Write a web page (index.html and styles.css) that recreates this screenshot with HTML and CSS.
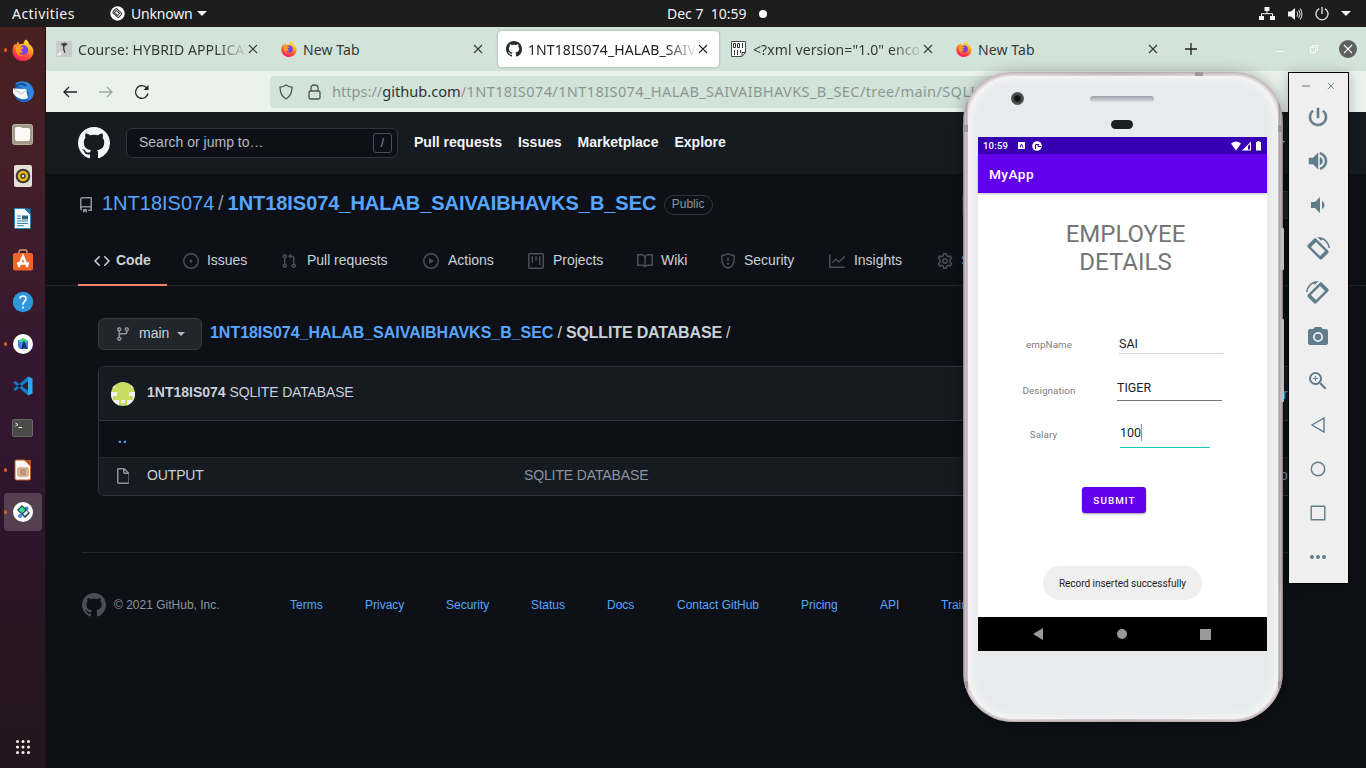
FILE: index.html
```html
<!DOCTYPE html>
<html lang="en">
<head>
<meta charset="utf-8">
<title>1NT18IS074_HALAB_SAIVAIBHAVKS_B_SEC</title>
<link rel="stylesheet" href="styles.css">
</head>
<body>
<svg class="defs" width="0" height="0">
  <defs>
    <linearGradient id="fx" x1="0.8" y1="0" x2="0.3" y2="1"><stop offset="0" stop-color="#fff03a"/><stop offset=".35" stop-color="#ffae24"/><stop offset=".65" stop-color="#ff5630"/><stop offset="1" stop-color="#f5156c"/></linearGradient>
    <symbol id="firefox" viewBox="0 0 22 22"><path fill="url(#fx)" d="M14 .5c2 1.400 2.700 3 3 4.400 2.600 1.600 4.500 4.700 4.500 7.300C21.500 17.800 17 22 11.200 22 5.200 22 .5 17.600.5 11.900c0-3 .9-5.500 2.700-7.400l.8 2 1.800-4 1.700 3c1.400-.8 2.700-.9 4-.5C11.500 3.500 12.200 1.700 14 .5z"/><circle cx="11.500" cy="11" r="4.700" fill="#7543e5"/><path fill="#ff9a22" d="M3.500 7.500c2.500-1.500 4.500-.8 5.500.4 1.400.1 2.400.3 2.700.8-.5 1.200-2.500 1.100-2.700 2.200-.1 1 1.300 1.600 2.500 1.100-.9 2-3.500 2.400-5 .9.200 2.500 3 4 5.500 3.500-4 2-9-.8-8.500-8.900z"/></symbol>
    <symbol id="mark" viewBox="0 0 16 16"><path d="M8 0C3.580 0 0 3.580 0 8c0 3.540 2.290 6.530 5.470 7.590.4.070.55-.17.55-.38 0-.19-.01-.82-.01-1.490-2.010.37-2.530-.49-2.690-.94-.09-.23-.48-.94-.82-1.130-.28-.15-.68-.52-.01-.53.63-.01 1.080.58 1.230.82.720 1.210 1.870.87 2.330.66.070-.52.280-.87.510-1.070-1.780-.2-3.640-.89-3.640-3.950 0-.87.310-1.590.820-2.150-.08-.2-.36-1.020.08-2.120 0 0 .67-.21 2.200.82.640-.18 1.320-.27 2-.27.680 0 1.360.09 2 .27 1.530-1.040 2.200-.82 2.200-.82.440 1.100.160 1.920.080 2.120.510.560.820 1.270.820 2.150 0 3.070-1.870 3.750-3.650 3.950.290.250.540.730.540 1.480 0 1.070-.01 1.930-.01 2.200 0 .210.150.460.550.380A8.013 8.013 0 0016 8c0-4.420-3.580-8-8-8z"/></symbol>
    <symbol id="x" viewBox="0 0 10 10"><path d="M1 1l8 8M9 1l-8 8" fill="none" stroke="currentColor" stroke-width="1.100"/></symbol>
    <symbol id="rotate" viewBox="0 0 24 24"><path d="M16.480 2.520c3.270 1.550 5.610 4.720 5.970 8.480h1.500C23.440 4.840 18.290 0 12 0l-.66.03 3.810 3.810 1.330-1.320zm-6.250-.77c-.59-.59-1.540-.59-2.120 0L1.750 8.110c-.59.59-.59 1.540 0 2.120l12.020 12.020c.59.59 1.540.59 2.120 0l6.360-6.360c.59-.59.59-1.540 0-2.120L10.230 1.750zm4.600 18.100L4.150 9.170l5.020-5.020 10.680 10.680-5.020 5.020z"/><path d="M8.500 2.500l-6.500 6.500 2 2 6.500-6.500zM13.500 19.500l6.500-6.500 2 2-6.500 6.500z"/></symbol>
  </defs>
</svg>

<div class="desktop">
  <header class="topbar">
    <span class="activities">Activities</span>
    <span class="appmenu">
      <svg width="15" height="15" viewBox="0 0 15 15"><circle cx="7.500" cy="7.500" r="7.200" fill="#fff"/><g transform="rotate(42 7.500 7.500)" fill="none" stroke="#333" stroke-width="1"><rect x="3" y="4.500" width="8" height="5.500" rx="1"/><path d="M4.500 6h4.500v3H4.500z" fill="#eee"/></g></svg>
      <span class="appname">Unknown</span><i class="caret"></i>
    </span>
    <span class="clock">Dec 7&nbsp; 10:59</span><i class="dot"></i>
    <span class="tray">
      <svg width="16" height="14" viewBox="0 0 16 14" fill="#f4f4f4"><path d="M5.500 0h5v4h-5zM0 9h5v4H0zM11 9h5v4h-5z"/><path d="M8 4v3M2.500 9V6.700h11V9" fill="none" stroke="#f4f4f4"/></svg>
      <svg width="16" height="14" viewBox="0 0 16 14"><path d="M1 4.500h3L8 1v12L4 9.500H1z" fill="#f4f4f4"/><path d="M9.800 4.500q1.800 2.500 0 5M11.500 3q3 4 0 8M13.200 1.500q3.500 5.500 0 11" fill="none" stroke="#ccc" stroke-width="1.100"/></svg>
      <svg width="14" height="14" viewBox="0 0 14 14" fill="none" stroke="#e8e8e8" stroke-width="1.300"><path d="M7 0v7M4.200 1.600a6 6 0 105.600 0"/></svg>
      <i class="caret"></i>
    </span>
  </header>

  <aside class="dock">
    <div class="app run"><svg width="22" height="22"><use href="#firefox"/></svg></div>
    <div class="app"><svg width="22" height="22" viewBox="0 0 22 22"><circle cx="12" cy="11.500" r="9.800" fill="#1d64bd"/><path d="M3 3C7-1 14-.5 18 3c4 4 5 9 2 14l-4 3 1-9z" fill="#2f8ade"/><path d="M1 7.500l13 .5 2 9c-5 3-12 0-15-5z" fill="#f7f8fa"/><path d="M2 8l7 5 6-4" fill="none" stroke="#a9c4df"/><path d="M3 6C6 2 11 2 14 5" fill="none" stroke="#1750a0" stroke-width="2"/></svg></div>
    <div class="app"><svg width="21" height="21" viewBox="0 0 21 21"><rect x=".5" y=".5" width="20" height="20" rx="2" fill="#a29a88" stroke="#b8b09d"/><path d="M3 5q0-2 2-2h4l1 1h6q2 0 2 2v9q0 2-2 2H5q-2 0-2-2z" fill="#faf9f6"/></svg></div>
    <div class="app"><svg width="18" height="22" viewBox="0 0 18 22"><rect width="18" height="22" rx="2" fill="#e4e0d6"/><circle cx="9" cy="11" r="7.300" fill="#3b3a38"/><circle cx="9" cy="11" r="4" fill="none" stroke="#f0b90f" stroke-width="2.600"/><circle cx="9" cy="11" r="1.300" fill="#ddd"/></svg></div>
    <div class="app"><svg width="17" height="21" viewBox="0 0 17 21"><path d="M1.500.5H11L16.500 6v13.500q0 1-1 1h-14q-1 0-1-1v-18q0-1 1-1z" fill="#fafdff" stroke="#2784b5"/><path d="M10 .5h6.500V7z" fill="#1a78ad"/><path d="M3 8h4M3 10.500h4M3 13h11M3 15.500h11M3 17.700h7" stroke="#2e86ba" stroke-width="1.100"/><path d="M8 7.500h6v4H8z" fill="#26668b"/></svg></div>
    <div class="app"><svg width="22" height="22" viewBox="0 0 22 22"><path d="M7 5V3q0-2 2-2h4q2 0 2 2v2" fill="none" stroke="#dc9c76" stroke-width="1.400"/><rect x="1" y="4" width="20" height="17.500" rx="2" fill="#f0642b"/><path d="M6.500 18L11 7l4.500 11M5 14.500h12" fill="none" stroke="#fff" stroke-width="2.300"/></svg></div>
    <div class="app"><svg width="22" height="22" viewBox="0 0 22 22"><circle cx="11" cy="11" r="10.200" fill="#2e96dd"/><path d="M8 7.500Q8 5 11 5t3 2.700c0 2.300-3 2.600-3 6" fill="none" stroke="#fff" stroke-width="1.700"/><circle cx="11" cy="16.500" r="1.100" fill="#fff"/></svg></div>
    <div class="app run"><svg width="20" height="20" viewBox="0 0 20 20"><circle cx="10" cy="10" r="10" fill="#fff"/><path d="M5 6h9v1h1v8H7l-2-2z" fill="#3f80f0"/><path d="M6 6.500q4-5 8 0v1.500H6z" fill="#3ddc84"/><path d="M9 15l2-6.500L13.500 15M9.500 13h3.500" fill="none" stroke="#0c2846" stroke-width="1.400"/></svg></div>
    <div class="app"><svg width="20" height="20" viewBox="0 0 20 20"><path d="M15 .5l4.500 2v15l-4.500 2z" fill="#2ba9f2"/><path d="M15 .5v4.800L2.200 15 .3 13.300zM15 19.500v-4.800L2.200 5 .3 6.700z" fill="#0f7dc8"/></svg></div>
    <div class="app"><svg width="21" height="18" viewBox="0 0 21 18"><rect x=".5" y=".5" width="20" height="17" rx="1.500" fill="#4a4a48" stroke="#686866"/><path d="M3.500 4l2.500 1.500L3.500 7M6.500 8.500H10" fill="none" stroke="#eee"/></svg></div>
    <div class="app run"><svg width="18" height="22" viewBox="0 0 18 22"><path d="M2 1h9l5.500 5.500v13q0 1.500-1.500 1.500H2.500Q1 21 1 19.500V2q0-1 1-1z" fill="#fdf8f4" stroke="#c6591c"/><path d="M10 1h7v7z" fill="#b44d12"/><rect x="4" y="9" width="10" height="8" rx="1" fill="#f7dfd0" stroke="#c6753c"/><path d="M5.500 11h7M5.500 13h7M5.500 15h7" stroke="#8d4c24"/></svg></div>
    <div class="app run active"><svg width="20" height="20" viewBox="0 0 20 20"><circle cx="10" cy="10" r="10" fill="#fff"/><circle cx="7" cy="14" r="2" fill="#4285f4"/><circle cx="13.500" cy="6.500" r="2" fill="#4285f4"/><path d="M4 8l5-5 8 8-5 5z" fill="#123a50"/><path d="M5.500 8L9 4.500l3.500 3.500L9 11.500z" fill="#3ddc84"/><path d="M10 12l3.500-3.500 2 2L12 14z" fill="#d8e8f2"/></svg></div>
    <svg class="grid" width="14" height="14" viewBox="0 0 14 14" fill="#f2f2f2"><circle cx="1.500" cy="1.500" r="1.500"/><circle cx="7" cy="1.500" r="1.500"/><circle cx="12.500" cy="1.500" r="1.500"/><circle cx="1.500" cy="7" r="1.500"/><circle cx="7" cy="7" r="1.500"/><circle cx="12.500" cy="7" r="1.500"/><circle cx="1.500" cy="12.500" r="1.500"/><circle cx="7" cy="12.500" r="1.500"/><circle cx="12.500" cy="12.500" r="1.500"/></svg>
  </aside>

  <main class="browser">
    <div class="tabs">
      <div class="tab"><svg width="16" height="16" viewBox="0 0 16 16"><rect width="16" height="16" fill="#c9caca"/><path d="M4.500 3l4-1.500L12 3 8.500 5.500V8l1 4H8.500L7 8.500V5z" fill="#444"/><path d="M1 13l5-3-1 4.500H1z" fill="#eee"/></svg><span class="label fade">Course: HYBRID APPLICAT</span><svg class="close"><use href="#x"/></svg></div>
      <div class="tab"><svg width="16" height="16"><use href="#firefox"/></svg><span class="label">New Tab</span><svg class="close"><use href="#x"/></svg></div>
      <div class="tab current"><svg width="16" height="16" fill="#24292e"><use href="#mark"/></svg><span class="label fade">1NT18IS074_HALAB_SAIV</span><svg class="close"><use href="#x"/></svg></div>
      <div class="tab"><svg width="16" height="16" viewBox="0 0 16 16"><path d="M.5.500h14v11l-3.500 4H.5z" fill="#fff" stroke="#444a48"/><path d="M2.500 2.500h2v4h-2zM6.500 2.500h2v4h-2zM11.500 2v5M3.500 9v5M6.500 9v5M9.500 9v3M11 15v-3.500h3.500" fill="none" stroke="#333"/></svg><span class="label fade">&lt;?xml version="1.0" encod</span><svg class="close"><use href="#x"/></svg></div>
      <div class="tab"><svg width="16" height="16"><use href="#firefox"/></svg><span class="label">New Tab</span><svg class="close"><use href="#x"/></svg></div>
      <svg class="plus" width="12" height="12" viewBox="0 0 12 12"><path d="M6 0v12M0 6h12" stroke="#222" stroke-width="1.300"/></svg>
      <div class="winctl">
        <i class="min"></i>
        <svg width="8" height="8" viewBox="0 0 8 8" fill="none" stroke="#f5faf7"><path d="M.5 2.500h5v5h-5zM2.500 2V.5h5v5H6"/></svg>
        <span class="winclose"><svg class="close"><use href="#x"/></svg></span>
      </div>
    </div>
    <div class="toolbar">
      <svg width="14" height="12" viewBox="0 0 14 12" fill="none" stroke="#222" stroke-width="1.300"><path d="M14 6H1M6 1L1 6l5 5"/></svg>
      <svg class="fwd" width="14" height="12" viewBox="0 0 14 12" fill="none" stroke="#9caaa3" stroke-width="1.300"><path d="M0 6h13M8 1l5 5-5 5"/></svg>
      <svg class="reload" width="16" height="16" viewBox="0 0 16 16" fill="none" stroke="#222" stroke-width="1.300"><path d="M14 9.500A6.300 6.300 0 112.500 4.800 6.300 6.300 0 0113 4"/><path d="M14.500 1v5h-5z" fill="#222" stroke="none"/></svg>
      <div class="urlbar">
        <svg width="16" height="16" viewBox="0 0 16 16" fill="none" stroke="#4b5550" stroke-width="1.300"><path d="M8 1c2 1.500 4 2 6 2.100 0 4-.6 9-6 11.900C2.600 12.100 2 7.100 2 3.100 4 3 6 2.500 8 1z"/></svg>
        <svg class="lock" width="13" height="16" viewBox="0 0 13 16" fill="none" stroke="#4b5550" stroke-width="1.300"><rect x="1" y="7" width="11" height="8" rx="1.500"/><path d="M3 7V4q0-3 3.500-3T10 4v3"/></svg>
        <span class="url">https://<b>github.com</b><span class="path">/1NT18IS074/1NT18IS074_HALAB_SAIVAIBHAVKS_B_SEC/tree/main/SQLLITE</span></span>
      </div>
      <svg class="pocket" width="16" height="14" viewBox="0 0 16 14" fill="none" stroke="#222" stroke-width="1.400"><path d="M1 1.500h14V6c0 9-14 9-14 0zM4.500 5L8 8.500 11.500 5"/></svg>
    </div>

    <div class="page">
      <div class="ghbar">
        <svg width="32" height="32" fill="#f0f6fc"><use href="#mark"/></svg>
        <div class="search"><span>Search or jump to…</span><kbd>/</kbd></div>
        <nav class="ghnav"><a>Pull requests</a><a>Issues</a><a>Marketplace</a><a>Explore</a></nav>
        <i class="usercaret"></i>
      </div>
      <div class="repohead">
        <div class="title">
          <svg width="16" height="16" viewBox="0 0 16 16" fill="#8b949e"><path fill-rule="evenodd" d="M2 2.500A2.500 2.500 0 014.500 0h8.750a.75.75 0 01.75.75v12.500a.75.75 0 01-.75.75h-2.500a.75.75 0 110-1.500h1.750v-2h-8a1 1 0 00-.714 1.700.75.75 0 01-1.072 1.050A2.495 2.495 0 012 11.500v-9zm10.500-1V9h-8c-.356 0-.694.074-1 .208V2.500a1 1 0 011-1h8zM5 12.250v3.250a.25.25 0 00.4.2l1.450-1.087a.25.25 0 01.3 0L8.600 15.700a.25.25 0 00.4-.2v-3.250a.25.25 0 00-.25-.25h-3.500a.25.25 0 00-.25.25z"/></svg>
          <a class="owner">1NT18IS074</a><span class="slash">/</span><a class="repo">1NT18IS074_HALAB_SAIVAIBHAVKS_B_SEC</a><span class="pill">Public</span><span class="watch"></span>
        </div>
        <nav class="reponav">
          <a class="w1 sel"><svg width="16" height="16" viewBox="0 0 16 16"><path d="M4.720 3.220a.75.75 0 011.060 1.060L2.060 8l3.720 3.720a.75.75 0 11-1.060 1.060L.47 8.530a.75.75 0 010-1.060l4.250-4.250zm6.560 0a.75.75 0 10-1.060 1.060L13.940 8l-3.720 3.720a.75.75 0 101.060 1.060l4.250-4.250a.75.75 0 000-1.060l-4.250-4.250z"/></svg><span>Code</span></a>
          <a class="w2"><svg width="16" height="16" viewBox="0 0 16 16"><path d="M8 9.500a1.500 1.500 0 100-3 1.500 1.500 0 000 3z"/><path fill-rule="evenodd" d="M8 0a8 8 0 100 16A8 8 0 008 0zM1.500 8a6.500 6.500 0 1113 0 6.500 6.500 0 01-13 0z"/></svg><span>Issues</span></a>
          <a class="w3"><svg width="16" height="16" viewBox="0 0 16 16"><path fill-rule="evenodd" d="M7.177 3.073L9.573.677A.25.25 0 0110 .854v4.792a.25.25 0 01-.427.177L7.177 3.427a.25.25 0 010-.354zM3.750 2.500a.75.75 0 100 1.500.75.75 0 000-1.500zm-2.250.75a2.250 2.250 0 113 2.122v5.256a2.251 2.251 0 11-1.500 0V5.372A2.250 2.250 0 011.500 3.250zM11 2.500h-1V4h1a1 1 0 011 1v5.628a2.251 2.251 0 101.500 0V5A2.500 2.500 0 0011 2.500zm1 10.250a.75.75 0 111.500 0 .75.75 0 01-1.500 0zM3.750 12a.75.75 0 100 1.500.75.75 0 000-1.500z"/></svg><span>Pull requests</span></a>
          <a class="w4"><svg width="16" height="16" viewBox="0 0 16 16"><path fill-rule="evenodd" d="M1.500 8a6.500 6.500 0 1113 0 6.500 6.500 0 01-13 0zM8 0a8 8 0 100 16A8 8 0 008 0zM6.379 5.227A.25.25 0 006 5.442v5.117a.25.25 0 00.379.214l4.264-2.559a.25.25 0 000-.428L6.379 5.227z"/></svg><span>Actions</span></a>
          <a class="w5"><svg width="16" height="16" viewBox="0 0 16 16"><path fill-rule="evenodd" d="M1.750 0A1.750 1.750 0 000 1.750v12.500C0 15.216.784 16 1.750 16h12.500A1.750 1.750 0 0016 14.250V1.750A1.750 1.750 0 0014.250 0H1.750zM1.500 1.750a.25.25 0 01.25-.25h12.500a.25.25 0 01.25.25v12.500a.25.25 0 01-.25.25H1.750a.25.25 0 01-.25-.25V1.750zM11.750 3a.75.75 0 00-.75.75v7.500a.75.75 0 001.500 0v-7.500a.75.75 0 00-.75-.75zm-8.250.75a.75.75 0 011.500 0v5.500a.75.75 0 01-1.500 0v-5.500zM8 3a.75.75 0 00-.75.75v3.500a.75.75 0 001.500 0v-3.500A.75.75 0 008 3z"/></svg><span>Projects</span></a>
          <a class="w6"><svg width="16" height="16" viewBox="0 0 16 16"><path fill-rule="evenodd" d="M0 1.750A.75.75 0 01.75 1h4.253c1.227 0 2.317.59 3 1.501A3.744 3.744 0 0111.006 1h4.245a.75.75 0 01.75.75v10.500a.75.75 0 01-.75.75h-4.507a2.250 2.250 0 00-1.591.659l-.622.621a.75.75 0 01-1.060 0l-.622-.621A2.250 2.250 0 005.258 13H.75a.75.75 0 01-.75-.75V1.750zm8.755 3a2.250 2.250 0 012.250-2.250H14.500v9h-3.757c-.71 0-1.400.201-1.992.572l.004-7.322zm-1.504 7.324l.004-5.073-.002-2.253A2.250 2.250 0 005.003 2.500H1.500v9h3.757a3.750 3.750 0 011.994.574z"/></svg><span>Wiki</span></a>
          <a class="w7"><svg width="16" height="16" viewBox="0 0 16 16"><path fill="none" stroke="#484f58" stroke-width="1.500" d="M8 .8L14.200 2.800V7c0 4-2.300 6.700-6.200 8.200C4.100 13.700 1.800 11 1.800 7V2.800z"/><path d="M7.250 4.500h1.500v4h-1.500zM7.100 10h1.800v1.800H7.100z"/></svg><span>Security</span></a>
          <a class="w8"><svg width="16" height="16" viewBox="0 0 16 16"><path d="M1.500 1.750a.75.75 0 00-1.500 0v12.500c0 .414.336.75.75.75h14.500a.75.75 0 000-1.500H1.500V1.750zm14.280 2.530a.75.75 0 00-1.060-1.060L10 7.940 7.530 5.470a.75.75 0 00-1.060 0L3.220 8.720a.75.75 0 001.060 1.060L7 7.060l2.470 2.470a.75.75 0 001.060 0l5.250-5.250z"/></svg><span>Insights</span></a>
          <a class="w9"><svg width="16" height="16" viewBox="0 0 16 16"><g fill="none" stroke="#484f58" stroke-width="1.500"><circle cx="8" cy="8" r="2.200"/><path d="M6.700.8h2.600l.5 2 1.400.8 2-.6 1.300 2.200-1.500 1.500v2.600l1.500 1.500-1.300 2.200-2-.6-1.400.8-.5 2H6.700l-.5-2-1.400-.8-2 .6-1.300-2.200L3 9.300V6.700L1.500 5.200 2.800 3l2 .6 1.400-.8z"/></g></svg><span class="settings">Settings</span></a>
        </nav>
      </div>
      <section class="content">
        <div class="pathrow">
          <button class="branch"><svg width="16" height="16" viewBox="0 0 16 16" fill="#8b949e"><path fill-rule="evenodd" d="M11.750 2.500a.75.75 0 100 1.500.75.75 0 000-1.500zm-2.250.75a2.250 2.250 0 113 2.122V6A2.500 2.500 0 0110 8.500H6a1 1 0 00-1 1v1.128a2.251 2.251 0 11-1.500 0V5.372a2.250 2.250 0 111.500 0v1.836A2.492 2.492 0 016 7h4a1 1 0 001-1v-.628A2.250 2.250 0 019.500 3.250zM4.250 12a.75.75 0 100 1.500.75.75 0 000-1.500zM3.500 3.250a.75.75 0 111.500 0 .75.75 0 01-1.500 0z"/></svg><span>main</span><i class="caret small"></i></button>
          <div class="crumbs"><a>1NT18IS074_HALAB_SAIVAIBHAVKS_B_SEC</a> / <b>SQLLITE DATABASE</b> /</div>
        </div>
        <div class="files">
          <div class="commit"><svg width="24" height="24" viewBox="0 0 24 24"><clipPath id="av"><circle cx="12" cy="12" r="12"/></clipPath><g clip-path="url(#av)"><path fill="#c8db62" d="M0 0h24v24H0z"/><path fill="#f0f0f0" d="M0 0h4v6H0zM20 0h4v6h-4zM0 10h6v4H0zM18 10h6v4h-6zM0 14h2v10H0zM22 14h2v10h-2zM2 18h6v6H2zM16 18h6v6h-6zM10 18h4v3h-4z"/></g></svg><p><b>1NT18IS074</b> <span>SQLITE DATABASE</span></p><a class="peek">r</a></div>
          <div class="up"><a>..</a></div>
          <div class="file"><svg width="16" height="16" viewBox="0 0 16 16" fill="#8b949e"><path fill-rule="evenodd" d="M3.750 1.500a.25.25 0 00-.25.25v12.500c0 .138.112.25.25.25h9.500a.25.25 0 00.25-.25V6H9.750A1.750 1.750 0 018 4.250V1.500H3.750zm5.750.56v2.190c0 .138.112.25.25.25h2.190L9.500 2.060zM2 1.750C2 .784 2.784 0 3.750 0h5.086c.464 0 .909.184 1.237.513l3.414 3.414c.329.328.513.773.513 1.237v9.086A1.750 1.750 0 0113.250 16h-9.500A1.750 1.750 0 012 14.250V1.750z"/></svg><span class="fname">OUTPUT</span><span class="msg">SQLITE DATABASE</span><span class="peek dim">o'</span></div>
        </div>
      </section>
      <footer class="foot">
        <svg width="24" height="24" fill="#484f58"><use href="#mark"/></svg>
        <span class="copy">© 2021 GitHub, Inc.</span>
        <nav class="links"><a class="l1">Terms</a><a class="l2">Privacy</a><a class="l3">Security</a><a class="l4">Status</a><a class="l5">Docs</a><a class="l6">Contact GitHub</a><a class="l7">Pricing</a><a class="l8">API</a><a>Training</a></nav>
      </footer>
    </div>
  </main>
</div>

<div class="phone">
  <i class="key key1"></i><i class="key key2"></i>
  <i class="seam s1"></i><i class="seam s2"></i><i class="seam s3"></i><i class="seam s4"></i><i class="seam s5"></i>
  <div class="face">
    <div class="sensors"><i class="camera"></i><i class="speaker"></i><i class="sensor"></i></div>
    <div class="screen">
      <div class="status"><span>10:59</span>
        <svg width="7" height="7" viewBox="0 0 7 7"><path d="M0 0h7v7H0z" fill="#fff"/><path d="M2 5.500L3.500 2 5 5.500" fill="none" stroke="#3700b3"/></svg>
        <svg width="10" height="10" viewBox="0 0 10 10"><circle cx="5" cy="5" r="4.800" fill="#fff"/><path d="M3.500 8V3.500H7M6 3.500v2h3" fill="none" stroke="#3700b3"/></svg>
        <svg class="net" width="31" height="10" viewBox="0 0 31 10" fill="#fff"><path d="M0 2.500Q5-1.500 10 2.500L5 9.500zM11 9.500l9-9v9z"/><path d="M17 5v3.500h2V3z" fill="#3700b3"/><path d="M25 1h1.500V0h2v1H30v8.500h-5z"/></svg>
      </div>
      <div class="appbar">MyApp</div>
      <div class="form">
        <h1>EMPLOYEE<br>DETAILS</h1>
        <div class="row r1"><label>empName</label><span class="input">SAI</span></div>
        <div class="row r2"><label>Designation</label><span class="input">TIGER</span></div>
        <div class="row r3"><label>Salary</label><span class="input">100<i></i></span></div>
        <button class="submit">SUBMIT</button>
        <div class="toast">Record inserted successfully</div>
      </div>
      <div class="navbar">
        <svg width="10" height="12" viewBox="0 0 10 12"><path d="M10 0v12L0 6z" fill="#999"/></svg>
        <i class="home"></i><i class="recent"></i>
      </div>
    </div>
  </div>
</div>

<div class="panel">
  <div class="pctl"><i></i><svg class="close"><use href="#x"/></svg></div>
  <div class="tool"><svg viewBox="0 0 24 24"><path stroke="#607d8b" stroke-width=".6" d="M13 3h-2v10h2V3zm4.830 2.170l-1.420 1.420C17.990 7.860 19 9.810 19 12c0 3.870-3.130 7-7 7s-7-3.130-7-7c0-2.190 1.010-4.140 2.580-5.420L6.170 5.170C4.230 6.820 3 9.260 3 12c0 4.970 4.030 9 9 9s9-4.030 9-9c0-2.740-1.230-5.180-3.170-6.830z"/></svg></div>
  <div class="tool"><svg viewBox="0 0 24 24"><path stroke="#607d8b" stroke-width=".5" d="M3 9v6h4l5 5V4L7 9H3zm13.500 3c0-1.770-1.020-3.290-2.500-4.030v8.050c1.480-.73 2.500-2.250 2.500-4.020zM14 3.230v2.060c2.890.86 5 3.540 5 6.710s-2.110 5.850-5 6.710v2.060c4.010-.91 7-4.490 7-8.770s-2.990-7.860-7-8.770z"/></svg></div>
  <div class="tool"><svg viewBox="0 0 24 24"><path d="M18.500 12c0-1.770-1.020-3.290-2.500-4.030v8.050c1.480-.73 2.500-2.250 2.500-4.020zM5 9v6h4l5 5V4L9 9H5z"/></svg></div>
  <div class="tool"><svg viewBox="0 0 24 24"><use href="#rotate"/></svg></div>
  <div class="tool flip"><svg viewBox="0 0 24 24"><use href="#rotate"/></svg></div>
  <div class="tool"><svg viewBox="0 0 24 24"><path fill-rule="evenodd" d="M9 2L7.170 4H4c-1.100 0-2 .9-2 2v12c0 1.100.9 2 2 2h16c1.100 0 2-.9 2-2V6c0-1.100-.9-2-2-2h-3.170L15 2H9zm3 15a5 5 0 110-10 5 5 0 010 10zm0-1.800a3.200 3.200 0 100-6.400 3.200 3.200 0 000 6.400z"/></svg></div>
  <div class="tool"><svg viewBox="0 0 24 24"><path fill-rule="evenodd" d="M15.500 14h-.79l-.28-.27A6.471 6.471 0 0016 9.500 6.500 6.500 0 109.500 16c1.610 0 3.090-.59 4.230-1.570l.27.280v.79l5 4.990L20.490 19l-4.990-5zm-6 0a4.500 4.500 0 110-9 4.500 4.500 0 010 9zM10 7H9v2H7v1h2v2h1v-2h2V9h-2z"/></svg></div>
  <div class="tool line"><svg viewBox="0 0 24 24"><path d="M18 5v14L6 12z"/></svg></div>
  <div class="tool line"><svg viewBox="0 0 24 24"><circle cx="12" cy="12" r="6.700"/></svg></div>
  <div class="tool line"><svg viewBox="0 0 24 24"><rect x="5.200" y="5.200" width="13.600" height="13.600" rx=".5"/></svg></div>
  <div class="tool"><svg viewBox="0 0 24 24"><circle cx="6" cy="12" r="2"/><circle cx="12" cy="12" r="2"/><circle cx="18" cy="12" r="2"/></svg></div>
</div>
</body>
</html>
```
FILE: styles.css
```css
* { box-sizing: border-box; }
body { margin: 0; width: 1366px; height: 768px; overflow: hidden; font-family: "Liberation Sans", Arial, sans-serif; font-size: 14px; color: #c9d1d9; background: #0d1117; }
svg { display: block; flex: none; }
i { display: block; flex: none; }
.defs { position: absolute; }
.desktop { display: grid; grid-template: 27px 741px / 46px 1320px; }

/* system bar */
.topbar { grid-column: 1 / 3; display: flex; align-items: center; background: #1d1d1d; color: #f2f2f2; font: 14px/27px "Noto Sans", sans-serif; padding-left: 12px; white-space: nowrap; }
.activities { width: 98px; letter-spacing: .45px; }
.appmenu { display: flex; align-items: center; width: 557px; }
.appname { margin-left: 6px; width: 66px; letter-spacing: -.2px; }
.caret { border: 5px solid transparent; border-top-color: #f2f2f2; border-bottom: 0; }
.clock { width: 92px; }
.dot { width: 8px; height: 8px; border-radius: 50%; background: #fff; }
.tray { display: flex; align-items: center; gap: 12px; margin-left: 492px; }

/* launcher */
.dock { display: flex; flex-direction: column; align-items: center; padding-top: 2px; background: linear-gradient(#48201f 0, #451f29 18%, #34182f 45%, #2d162c 65%, #23151b 100%); border-right: 1px solid #1b1017; }
.app { position: relative; width: 38px; height: 38px; margin: 2px 0; display: flex; align-items: center; justify-content: center; border-radius: 4px; }
.app.active { background: #554052; }
.app.run::before { content: ""; position: absolute; left: 0; top: 17px; width: 3px; height: 4px; border-radius: 2px; background: #e95420; }
.grid { margin-top: 207px; }

/* browser */
.browser { display: flex; flex-direction: column; font-family: "Noto Sans", sans-serif; }
.tabs { height: 44px; display: flex; align-items: center; background: #d2e3d9; color: #333b37; }
.tab { width: 221px; height: 36px; margin: 0 2px; padding-left: 8px; display: flex; align-items: center; border-radius: 4px; }
.current { background: #fff; box-shadow: 0 0 3px rgba(0,0,0,.3); color: #222; }
.label { width: 167px; margin: 2px 0 0 6px; line-height: 20px; letter-spacing: .1px; white-space: nowrap; }
.fade { -webkit-mask-image: linear-gradient(90deg, #000 138px, transparent 170px); mask-image: linear-gradient(90deg, #000 138px, transparent 170px); }
.close { width: 10px; height: 10px; margin-left: 3px; }
.plus { margin-left: 14px; }
.winctl { display: flex; align-items: center; margin-left: auto; padding-right: 9px; }
.min { width: 8px; height: 1px; margin: 4px 26px 0 0; background: #f5faf7; }
.winclose { display: flex; align-items: center; justify-content: center; width: 18px; height: 18px; margin-left: 21px; border-radius: 50%; background: #5d605e; color: #fff; }
.winclose .close { margin: 0; }
.toolbar { height: 41px; display: flex; align-items: center; padding-left: 17px; background: #e9f2ec; }
.fwd { margin-left: 22px; }
.reload { margin-left: 21px; }
.urlbar { width: 920px; height: 32px; margin-left: 120px; padding-left: 8px; display: flex; align-items: center; border-radius: 4px; background: #d2e3d9; }
.lock { margin-left: 14px; }
.url { margin: 0 0 2px 11px; font-size: 14.600px; line-height: 20px; color: #8b9891; white-space: nowrap; }
.url b { font-weight: 400; color: #2c3430; }
.path { letter-spacing: .36px; }
.pocket { margin-left: 27px; }

/* page */
.page { flex: 1; background: #0d1117; font-family: "Liberation Sans", Arial, sans-serif; }
.ghbar { height: 62px; display: flex; align-items: center; padding-left: 32px; background: #161b22; }
.search { width: 272px; height: 30px; margin-left: 16px; padding: 0 5px 0 12px; display: flex; align-items: center; justify-content: space-between; border: 1px solid #30363d; border-radius: 6px; background: #0d1117; color: #b5bbc2; }
.search span { margin-bottom: 2px; }
kbd { width: 19px; height: 20px; border: 1px solid #484f58; border-radius: 3px; font: 12px/18px "Liberation Sans", sans-serif; text-align: center; color: #8b949e; }
.ghnav { display: flex; gap: 16px; margin: 0 0 2px 16px; font-weight: 700; color: #f0f6fc; }
.usercaret { margin-left: 551px; border: 4px solid transparent; border-top-color: #ddd; border-bottom: 0; }
.repohead { height: 112px; border-bottom: 1px solid #21262d; }
.title { height: 62px; padding-left: 32px; display: flex; align-items: center; color: #8b949e; }
a { color: #58a6ff; }
.owner { margin: 0 0 3px 8px; width: 112px; font-size: 20px; }
.slash { margin: 0 4px 3px; font-size: 20px; }
.repo { width: 429px; margin-bottom: 3px; font-size: 20px; font-weight: 700; letter-spacing: -.05px; white-space: nowrap; }
.pill { margin-left: 7px; width: 49px; height: 20px; border: 1px solid #30363d; border-radius: 10px; font-size: 12px; line-height: 17px; text-align: center; }
.watch { width: 330px; height: 28px; margin-left: 249px; border: 1px solid #30363d; border-radius: 6px; background: #21262d; }
.reponav { display: flex; margin-left: 32px; }
.reponav a { height: 50px; display: flex; align-items: center; gap: 8px; padding-left: 16px; color: #c9d1d9; white-space: nowrap; fill: #484f58; }
.reponav a span { margin-bottom: 2px; letter-spacing: -.03px; }
.reponav .sel { gap: 6px; border-bottom: 2px solid #f78166; font-weight: 700; fill: #c9d1d9; }
.reponav .sel svg { margin-top: 2px; }
.reponav .sel span { margin: 0; }
.w1 { width: 89px; } .w2 { width: 98px; } .reponav .w3 { width: 142px; gap: 10px; } .reponav .w4 { width: 105px; gap: 9px; } .reponav .w5 { width: 109px; gap: 9px; } .w6 { width: 83px; } .w7 { width: 109px; } .reponav .w8 { width: 108px; gap: 9px; }
.reponav .settings { color: #58a6ff; }
.ghnav a { color: inherit; }
.content { padding: 32px 0 0 52px; }
.pathrow { display: flex; height: 32px; align-items: center; }
.branch { width: 104px; height: 32px; padding: 0 16px; display: flex; align-items: center; border: 1px solid #363b42; border-radius: 6px; background: #21262d; color: #c9d1d9; font: 14px "Liberation Sans", sans-serif; }
.branch span { margin: 0 8px 2px; }
.caret.small { border-width: 4px 4px 0; border-top-color: #b0b6bd; }
.crumbs { margin-left: 8px; margin-bottom: 3px; font-size: 16px; letter-spacing: -.25px; white-space: nowrap; }
.crumbs a { font-weight: 700; letter-spacing: -.03px; }
.crumbs b { letter-spacing: -.16px; }
.files { width: 1238px; height: 130px; margin-top: 16px; border: 1px solid #30363d; border-radius: 6px; overflow: hidden; }
.commit { height: 54px; display: flex; align-items: center; padding-left: 12px; background: #161b22; border-bottom: 1px solid #30363d; }
.commit p { margin: 0 0 3px 12px; width: 1136px; }
.commit p span { letter-spacing: -.15px; }
.up { height: 37px; padding: 9px 0 0 19px; font-weight: 700; line-height: 16px; letter-spacing: 1px; border-bottom: 1px solid #21262d; }
.file { height: 37px; display: flex; align-items: center; padding: 0 0 2px 16px; background: #161b22; }
.file span { margin-bottom: 2px; letter-spacing: -.13px; }
.file .fname { margin-left: 16px; width: 377px; }
.msg { width: 756px; color: #8b949e; }
.dim { color: #8b949e; }
.foot { width: 1248px; margin: 56px 0 0 36px; padding-top: 40px; display: flex; align-items: center; border-top: 1px solid #21262d; font-size: 12px; color: #8b949e; }
.copy { width: 176px; margin-left: 8px; }
.links { display: flex; white-space: nowrap; }
.l1 { width: 75px; } .l2 { width: 81px; } .l3 { width: 85px; } .l4 { width: 76px; } .l5 { width: 70px; } .l6 { width: 124px; } .l7 { width: 79px; } .l8 { width: 61px; }

/* handset window */
.phone { position: absolute; left: 963px; top: 72px; width: 320px; height: 650px; padding: 1px 0; border-radius: 50px; background: linear-gradient(90deg, #8f888a 0, #e0d7d9 2px, #b5a9ad 4px, #eee5e7 5px, #d8ced1 50%, #eee5e7 315px, #a99ea2 316px, #d9cfd2 318px, #8f888a 320px); box-shadow: 0 3px 16px rgba(0,0,0,.4), inset 0 0 4px #827579; }
.face { height: 643px; margin: 3px 5px; padding: 0 10px; border-radius: 45px; background: #e9eaec; box-shadow: inset 0 0 9px 2px #f8f9fa; }
.key { position: absolute; left: 318px; width: 3px; background: #cbc9c7; border-radius: 1px; }
.key1 { top: 156px; height: 42px; } .key2 { top: 247px; height: 83px; }
.seam { position: absolute; width: 5px; height: 7px; background: #a0989b; }
.s1 { left: 0; top: 53px; } .s2 { left: 315px; top: 53px; } .s3 { left: 2px; top: 609px; width: 3px; } .s4 { left: 315px; top: 609px; width: 3px; } .s5 { left: 232px; top: 0; width: 8px; height: 4px; }
.sensors { height: 61px; display: grid; grid-template: 28px 10px / 79px 130px 80px; justify-items: center; padding-top: 16px; }
.camera { width: 13px; height: 13px; border-radius: 50%; background: radial-gradient(#111 25%, #454849 45%, #666 100%); }
.speaker { width: 64px; height: 6px; margin-top: 4px; border-radius: 3px; background: linear-gradient(#9da3aa, #dadde0); }
.sensor { grid-column: 2; width: 22px; height: 9px; border-radius: 5px; background: #1c1f22; }
.screen { width: 289px; height: 514px; background: #fff; font-family: Roboto, sans-serif; color: #1d1d1d; }
.status { height: 17px; display: flex; align-items: center; padding: 0 5px 0 5px; background: #3700b3; color: #fff; font-size: 9.500px; font-weight: 500; letter-spacing: .2px; }
.status span { width: 35px; }
.status svg + svg { margin-left: 7px; }
.status .net { margin-left: auto !important; }
.appbar { height: 39px; padding-left: 11px; background: #6200ee; color: #fff; font-size: 13.700px; font-weight: 500; line-height: 41px; letter-spacing: .4px; box-shadow: 0 1px 2px rgba(0,0,0,.25); }
.form { height: 424px; display: flex; flex-direction: column; }
.form h1 { margin: 27px 0 0 6px; font-size: 24px; font-weight: 400; line-height: 28px; text-align: center; color: #757575; }
.row { display: flex; align-items: flex-start; }
.row label { font-size: 9.800px; line-height: 14px; letter-spacing: .1px; color: #808080; text-align: center; width: 142px; }
.input { display: flex; font-size: 12.500px; line-height: 16px; border-bottom: 1px solid #d5d5d5; width: 104px; height: 19px; }
.r1 { margin-top: 59px; } .r1 label { padding-top: 3px; } .r1 .input { margin-left: -1px; line-height: 18px; }
.r2 { margin-top: 26px; } .r2 label { padding-top: 4px; } .r2 .input { margin-left: -3px; height: 21px; width: 105px; border-color: #757575; }
.r3 { margin-top: 23px; } .r3 label { width: 131px; padding-top: 4px; } .r3 .input { margin-left: 11px; width: 90px; height: 24px; border-color: #14cfc0; line-height: 17px; }
.input i { width: 1px; height: 17px; background: #03dac5; }
.submit { width: 64px; height: 26px; margin: 39px 0 0 104px; padding: 0 0 0 1px; border: 0; border-radius: 3px; background: #6200ee; color: #fff; font: 500 9.800px Roboto, sans-serif; letter-spacing: 1.100px; box-shadow: 0 1px 2px rgba(0,0,0,.4); }
.toast { width: 159px; height: 34px; margin: 53px 0 0 65px; border-radius: 17px; background: #efefef; font-size: 10px; line-height: 35px; letter-spacing: -.03px; text-align: center; white-space: nowrap; }
.navbar { height: 34px; display: flex; align-items: center; padding-left: 55px; background: #000; }
.home { width: 10px; height: 10px; margin-left: 74px; border-radius: 50%; background: #999; }
.recent { width: 11px; height: 11px; margin-left: 73px; background: #999; }

/* handset controls window */
.panel { position: absolute; left: 1288px; top: 72px; width: 61px; height: 512px; border: 1px solid #000; background: #efefef; fill: #607d8b; color: #607d8b; box-shadow: 0 2px 12px rgba(0,0,0,.25); }
.pctl { height: 22px; display: flex; align-items: center; padding: 4px 0 0 13px; }
.pctl i { width: 8px; height: 2px; background: #a6b6be; }
.pctl .close { width: 8px; height: 8px; margin-left: 17px; stroke-width: 1.500; }
.tool { height: 44px; display: flex; align-items: center; justify-content: center; padding-right: 1px; }
.tool svg { width: 24px; height: 24px; }
.flip svg { transform: scaleX(-1); }
.line svg { fill: none; stroke: #607d8b; stroke-width: 1.400; }
```
